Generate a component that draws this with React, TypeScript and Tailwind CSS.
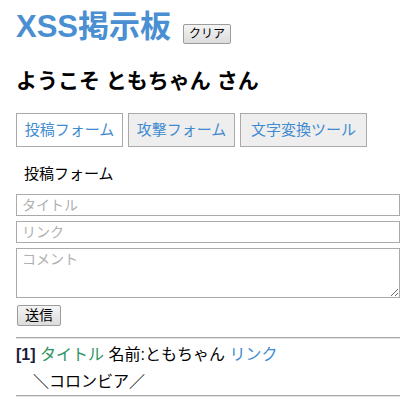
import React from 'react';

const font = {fontFamily: '"Liberation Sans", "Noto Sans CJK JP", sans-serif'};

const tabs = [
  {label: '投稿フォーム', active: true, w: 'w-[107px]'},
  {label: '攻撃フォーム', active: false, w: 'w-[107px]'},
  {label: '文字変換ツール', active: false, w: 'w-[127px]'},
];

export default function App() {
  return (
    <div style={font} className="min-h-[411px] bg-white px-4 text-black">
      {/* header */}
      <div className="mt-[7px] flex items-end">
        <h1 className="text-[31px] font-bold leading-[40px] text-[#4a8fd2]">XSS掲示板</h1>
        <button className="mb-[3px] ml-[12px] h-[20px] w-[48px] rounded-[2px] border border-[#9c9c9c] bg-gradient-to-b from-[#f4f4f4] to-[#dcdcdc] text-[12px] leading-none">
          クリア
        </button>
      </div>

      <h2 className="mt-[19px] text-[21px] font-bold leading-[30px]">ようこそ ともちゃん さん</h2>

      {/* tabs */}
      <div className="mt-[17px] flex gap-[5px]">
        {tabs.map((t) => (
          <button
            key={t.label}
            className={`${t.w} h-[34px] border border-[#aaaaaa] text-center text-[15px] text-[#3f8bd0] ${
              t.active ? 'bg-white' : 'bg-[#eeeeee]'
            }`}
          >
            {t.label}
          </button>
        ))}
      </div>

      <div className="mt-[17px] pl-2 text-[15px] leading-[20px]">投稿フォーム</div>

      {/* form */}
      <div className="mt-[10px] flex flex-col gap-[5px]">
        <input
          placeholder="タイトル"
          className="h-[22px] w-[384px] border border-[#aaaaaa] px-[5px] text-[14px] placeholder:text-[#b0b0b0] outline-none"
        />
        <input
          placeholder="リンク"
          className="h-[22px] w-[384px] border border-[#aaaaaa] px-[5px] text-[14px] placeholder:text-[#b0b0b0] outline-none"
        />
        <textarea
          placeholder="コメント"
          className="block h-[50px] w-[384px] border border-[#aaaaaa] px-[5px] py-[1px] text-[14px] leading-[18px] placeholder:text-[#b0b0b0] outline-none"
        />
        <div>
          <button className="ml-px h-[21px] w-[44px] rounded-[2px] border border-[#9c9c9c] bg-gradient-to-b from-[#f4f4f4] to-[#dcdcdc] text-[14px] leading-none">
            送信
          </button>
        </div>
      </div>

      <div className="mt-[10px] h-[2px] w-[384px] border-t border-[#a8a8a8] border-b border-b-[#e4e4e4]" />

      {/* post */}
      <div className="mt-[6px] text-[16px] leading-[20px]">
        <span className="font-bold text-[#1a1a3a]">[1]</span>{' '}
        <span className="text-[#2f9460]">タイトル</span> 名前:ともちゃん{' '}
        <span className="text-[#3f8bd0]">リンク</span>
      </div>
      <div className="mt-[7px] pl-[17px] text-[16px] leading-[20px]">＼コロンビア／</div>

      <div className="mt-[3px] h-[2px] w-[384px] border-t border-[#a8a8a8] border-b border-b-[#e4e4e4]" />
    </div>
  );
}
